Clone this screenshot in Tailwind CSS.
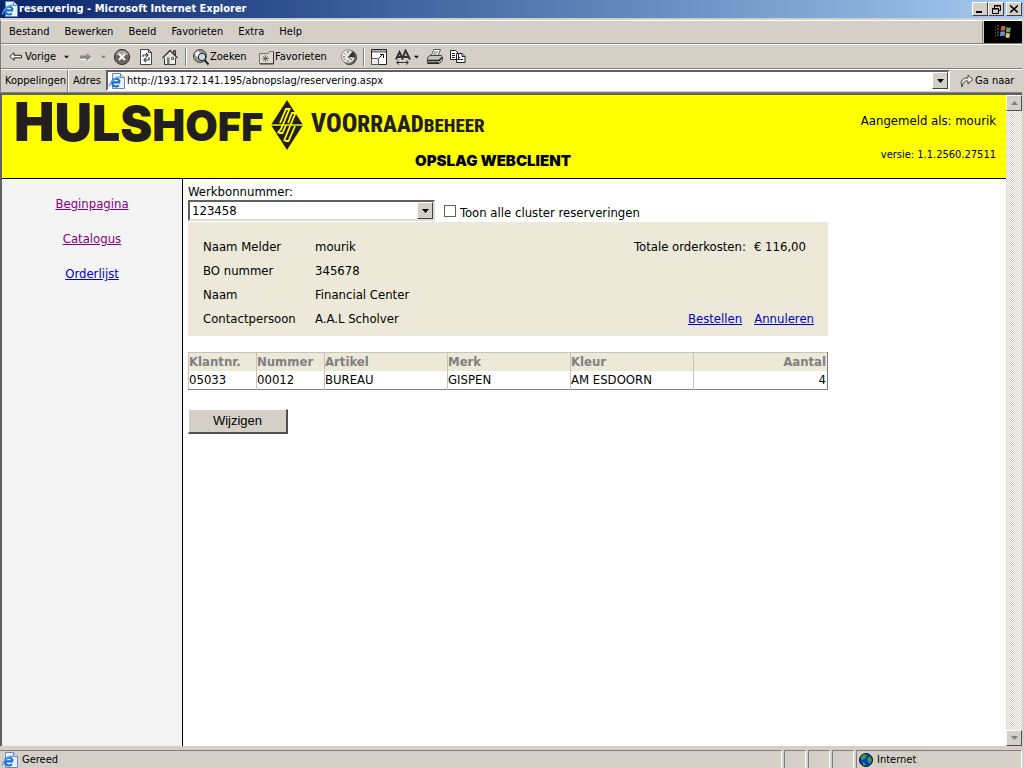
<!DOCTYPE html>
<html lang="nl">
<head>
<meta charset="utf-8">
<title>reservering - Microsoft Internet Explorer</title>
<script src="https://cdn.jsdelivr.net/npm/@tailwindcss/browser@4"></script>
</head>
<body class="flex h-screen flex-col overflow-hidden bg-[#d4d0c8] font-['DejaVu_Sans_Condensed','DejaVu_Sans',sans-serif] text-[11px] leading-4 text-black">

<svg class="hidden" aria-hidden="true">
  <symbol id="ie" viewBox="0 0 16 16">
    <path d="M3.500.5h8l4 4v11h-12z" fill="#e9f2ff" stroke="#6f86b8"/>
    <path d="M11.500.5v4h4" fill="#cfe0fa" stroke="#6f86b8"/>
    <path d="M11 9.300H3.800M10.800 8.800a3.900 3.900 0 1 0-1 3.500" fill="none" stroke="#1c6fd0" stroke-width="2.200"/>
    <path d="M.8 13.500C-.5 10 7 3.500 12 4" fill="none" stroke="#4ea3f0" stroke-width="1.300"/>
  </symbol>
  <symbol id="down" viewBox="0 0 7 4"><path d="M0 0h7L3.500 4z" fill="currentColor"/></symbol>
</svg>

<header class="shrink-0">
  <div class="flex h-[18px] items-center bg-linear-to-r from-[#0a246a] to-[#a6caf0] pr-0.5 pl-0.5">
    <svg class="size-4"><use href="#ie"/></svg>
    <h1 class="ml-px flex-1 font-bold text-white">reservering - Microsoft Internet Explorer</h1>
    <div class="flex">
      <button aria-label="Minimaliseren" class="flex h-[14px] w-4 items-center justify-center border border-white border-r-[#404040] border-b-[#404040] bg-[#d4d0c8]"><svg class="h-2 w-2.5" viewBox="0 0 10 8"><path d="M1 6h6v2H1z"/></svg></button>
      <button aria-label="Vorig formaat" class="flex h-[14px] w-4 items-center justify-center border border-white border-r-[#404040] border-b-[#404040] bg-[#d4d0c8]"><svg class="size-[9px]" viewBox="0 0 9 9" fill="none" stroke="#000"><path d="M2.500 3V.5h6v5H6.500M2 1h7M.5 3.500h6v5h-6zM0 4h7"/></svg></button>
      <button aria-label="Sluiten" class="ml-0.5 flex h-[14px] w-4 items-center justify-center border border-white border-r-[#404040] border-b-[#404040] bg-[#d4d0c8]"><svg class="size-2" viewBox="0 0 8 8"><path d="M0 .5l8 7M8 .5l-8 7" stroke="#000" stroke-width="1.600"/></svg></button>
    </div>
  </div>

  <div class="mr-0.5 border-l border-[#808080]">
    <div class="mt-0.5 flex h-6 border-t border-b border-t-white border-b-[#808080]">
      <nav class="flex flex-1 items-center gap-[15px] border-r border-[#808080] pl-2">
        <button>Bestand</button><button>Bewerken</button><button>Beeld</button><button>Favorieten</button><button>Extra</button><button>Help</button>
      </nav>
      <div class="ml-px flex w-[38px] items-center justify-center bg-black">
        <svg class="h-4 w-[18px]" viewBox="0 0 18 16">
          <path d="M7 3q2-2 4.500-.5L11 7Q9 5.500 6.500 7z" fill="#c8604c"/><path d="M12.500 3q2 1.500 4.500.3L16 8q-2.500 1-4-.5z" fill="#6da36a"/>
          <path d="M6.300 8Q8.500 6.500 11 8l-.5 4.500Q8 11 6 12.500z" fill="#6a93cb"/><path d="M12 8.500Q14 10 16 9l-.5 4.500q-2.500 1-4-.5z" fill="#d8c368"/>
          <path d="M1 3h1M3 2h2M1 6h1M3 5h2M1 9h1M3 8h2M1 12h1M3 11h2" stroke="#a66" />
        </svg>
      </div>
    </div>

    <div class="flex h-[25px] items-center border-t border-b border-t-white border-b-[#808080] pl-2">
      <button class="flex w-[54px] items-center gap-0.5"><svg class="h-[10px] w-3.5" viewBox="0 0 14 10" fill="#fff" stroke="#222"><path d="M.8 4.500 5 .8v2.500h7.500v2.500H5v2.500z"/></svg>Vorige</button>
      <svg class="h-1 w-[7px] scale-75"><use href="#down"/></svg>
      <svg class="ml-2 h-[10px] w-4" viewBox="0 0 16 10" fill="#8c8984"><path d="M2 3.500h6.500V1l5 4-5 4V6.500H2z"/><path d="M2 7.500h6M9 9.500l5-4" stroke="#fff"/></svg>
      <svg class="ml-1.5 h-1 w-[7px] scale-75 text-[#808080]"><use href="#down"/></svg>
      <button aria-label="Stoppen" class="ml-1.5"><svg class="size-[18px]" viewBox="0 0 18 18"><circle cx="9" cy="9" r="7.600" fill="#69675f" stroke="#34332e"/><path d="M3 7a6 4.500 0 0 1 12 0" fill="#aaa8a0"/><path d="M6 6l6 6m0-6-6 6" stroke="#fff" stroke-width="1.800"/></svg></button>
      <button aria-label="Vernieuwen" class="ml-1.5"><svg class="size-[18px]" viewBox="0 0 18 18"><path d="M3.500 1.500h8l3 3v12h-11z" fill="#fff" stroke="#444"/><path d="M11.500 1.500v3h3" fill="none" stroke="#444"/><path d="M6 9V7h5M9 5l2 2-2 2M12 9v3H7m2-2-2 2 2 2" fill="none" stroke="#444" stroke-width="1.200"/></svg></button>
      <button aria-label="Startpagina" class="ml-1.5"><svg class="size-[18px]" viewBox="0 0 18 18"><path d="M3.500 9v7.500h11V9" fill="#eee" stroke="#333"/><path d="M12.500 6V2.500h2V8" fill="#999" stroke="#333"/><path d="M1.500 10 9 2.500l7.500 7.500" fill="#e3e1db" stroke="#333" stroke-width="1.300"/><path d="M6 9.500h2.500v7H6z" fill="#777"/><path d="M10.500 9.500h2v2h-2z" fill="#fff" stroke="#555"/></svg></button>
      <span class="ml-1.5 h-[18px] w-0.5 border-l border-r border-l-[#808080] border-r-white"></span>
      <button class="ml-[5px] flex w-[58px] items-center"><svg class="size-[18px] shrink-0" viewBox="0 0 18 18"><circle cx="8" cy="8" r="6.500" fill="#9a9890" stroke="#444"/><path d="M3 5l3-2 2 2-2 4-2-1z" fill="#fff"/><circle cx="10" cy="9" r="3.700" fill="#c9dadf" stroke="#222"/><path d="M12.500 12l4 4.500" stroke="#222" stroke-width="2"/></svg>Zoeken</button>
      <button class="ml-2 flex w-[74px] items-center"><svg class="h-4 w-[17px] shrink-0" viewBox="0 0 17 16"><path d="M1.500 14.500V4.500h9l1-2h4v12z" fill="#dedbd3" stroke="#77746d"/><path d="M15.500 3v12H2" fill="none" stroke="#333"/><path d="M7.500 6v7M4 9.500h7M5 7l5 5m0-5-5 5" stroke="#555" stroke-width=".8"/></svg>Favorieten</button>
      <button aria-label="Geschiedenis" class="ml-2"><svg class="size-[18px]" viewBox="0 0 18 18"><circle cx="9.500" cy="9.500" r="7" fill="#696760" stroke="#333"/><circle cx="8" cy="8.500" r="6.700" fill="#e8e6e0" stroke="#88857c"/><path d="M8 9 12.500 3.500a7 7 0 0 1 2.500 6z" fill="#333"/><path d="M8 3v2M3 9h2M8 12v2M4.500 5.500l1 1M4.500 12l1-1M8 9l4 3" stroke="#555"/></svg></button>
      <span class="ml-[5px] h-[18px] w-0.5 border-l border-r border-l-[#808080] border-r-white"></span>
      <button aria-label="Volledig scherm" class="ml-1.5"><svg class="size-4" viewBox="0 0 16 16"><path d="M.5.5h15v15H.5z" fill="#fff" stroke="#222"/><path d="M1 2.500h14" stroke="#777" stroke-width="2"/><path d="M.5 9.500h7v6h-7z" fill="#eee" stroke="#555"/><path d="M8 9l4-4M9 5.500h3.500V9" fill="none" stroke="#111"/></svg></button>
      <button aria-label="Tekengrootte" class="ml-2 flex items-center"><svg class="size-4" viewBox="0 0 16 16" fill="none" stroke="#333"><path d="M1 10.500 4.500 3 8 10.500M2.500 8h4M7 10.500l3.500-9L15 10.500M8.500 8h5" stroke-width="2"/><path d="M2 13.500h11M4 11.500l-2.500 2L4 15.500M11 11.500l2.500 2-2.500 2"/></svg><svg class="ml-0.5 h-1 w-[7px] scale-75"><use href="#down"/></svg></button>
      <button aria-label="Afdrukken" class="ml-1.5"><svg class="size-[18px]" viewBox="0 0 18 18"><path d="M5 8l3-6.500h6.500L12 8z" fill="#fff" stroke="#555"/><path d="M8 4h4M7 6h4" stroke="#777"/><path d="M1.500 9.500 4 7.500h11.500l1 2v3l-3 3h-12z" fill="#c5c2ba" stroke="#444"/><path d="M2 12.500h11l3-3M2 15h11" fill="none" stroke="#222" stroke-width="1.500"/></svg></button>
      <button aria-label="Kopiëren" class="ml-1.5"><svg class="h-[15px] w-4" viewBox="0 0 16 15" fill="#fff" stroke="#222"><path d="M.5 1.500h5l3 3v6h-8zM6.500 4.500h5.500l3 3v6H6.500z"/><path d="M12 4.500v3h3M2 4.500h3M2 6.500h3M2 8.500h3M8 8.500h2M8 10.500h5" fill="none"/></svg></button>
    </div>

    <div class="flex h-[24px] items-stretch border-t border-b border-t-white border-b-[#808080]">
      <span class="flex w-[67px] items-center border-r border-[#808080] pl-1">Koppelingen</span>
      <label for="adres" class="flex w-[38px] items-center border-l border-white pl-1">Adres</label>
      <div class="flex h-[21px] flex-1 items-center border-2 border-white border-t-[#606060] border-l-[#606060] bg-white pl-px">
        <svg class="size-4"><use href="#ie"/></svg>
        <input id="adres" class="ml-0.5 h-4 min-w-0 flex-1 bg-white outline-none" value="http://193.172.141.195/abnopslag/reservering.aspx">
        <button aria-label="Adreslijst openen" class="flex h-[17px] w-4 items-center justify-center border border-white border-r-[#404040] border-b-[#404040] bg-[#d4d0c8]"><svg class="h-1 w-[7px]"><use href="#down"/></svg></button>
      </div>
      <button class="ml-2.5 flex w-[62px] items-center gap-px"><svg class="size-3.5" viewBox="0 0 14 14"><path d="M2 13C-.5 7 3 3.500 8 4V1l5 4.500L8 10V7C5 6.500 3 8 2 13z" fill="#eceae4" stroke="#444"/></svg>Ga naar</button>
    </div>
  </div>
</header>

<div class="mr-0.5 flex min-h-0 flex-1 border-t-2 border-l-2 border-[#606060] bg-white text-[13px]">
  <div class="flex min-w-0 flex-1 flex-col">
    <div class="flex h-[84px] shrink-0 justify-between border-b border-black bg-[#ffff00]">
      <div class="pl-3">
        <div class="flex h-[59px] items-center text-[#231f20]">
          <div class="flex w-[257px] items-baseline font-['Inter'] leading-[56px] font-black" aria-label="HULSHOFF"><span class="text-[54px]">H</span><span class="text-[52px]">U</span><span class="text-[50px]">L</span><span class="text-[48px]">S</span><span class="text-[44px]">H</span><span class="text-[42px]">O</span><span class="text-[40px]">F</span><span class="text-[38px]">F</span></div>
          <svg class="h-[50px] w-8 shrink-0" viewBox="0 0 32 50">
            <path d="M16 0 32 25 16 50 0 25z" fill="#231f20"/>
            <path d="M0 25h32" stroke="#ff0" stroke-width="1.400"/>
            <path d="M9 23 15 9h3.500L10 29 6.500 33M17 23l4-10h3.500L16 33.500 13 41M8 33h3.500L15 25M14 41h3.500L24 26" fill="none" stroke="#ff0" stroke-width="1.800"/>
          </svg>
          <div class="ml-2 flex items-baseline font-['Roboto_Condensed','Open_Sans_Condensed','Noto_Sans_Condensed','Liberation_Sans'] leading-8 font-extrabold" aria-label="VOORRAADBEHEER"><span class="text-[26px]">VOO</span><span class="text-[23px]">RRAAD</span><span class="text-[19px]">BEHEER</span></div>
        </div>
        <p class="pl-[401px] font-['Inter'] text-[15px] leading-[14px] font-black">OPSLAG WEBCLIENT</p>
      </div>
      <div class="pt-4 pr-2.5 text-right">
        <p class="leading-5">Aangemeld als: mourik</p>
        <p class="mt-3.5 text-[11px] leading-5">versie: 1.1.2560.27511</p>
      </div>
    </div>

    <div class="flex min-h-0 flex-1">
      <nav class="flex w-[181px] shrink-0 flex-col items-center gap-[15px] border-r border-black bg-[#f4f4f4] pt-[15px] leading-5">
        <a href="#" class="text-[#800080] underline">Beginpagina</a>
        <a href="#" class="text-[#800080] underline">Catalogus</a>
        <a href="#" class="text-[#0000cc] underline">Orderlijst</a>
      </nav>

      <main class="min-w-0 flex-1 pt-[5px] pl-[5px]">
        <label for="werkbon" class="block leading-4">Werkbonnummer:</label>
        <div class="flex items-center">
          <div class="relative h-[21px] w-[247px]">
            <select id="werkbon" class="h-full w-full appearance-none border-2 border-[#e0ddd6] border-t-[#606060] border-l-[#606060] bg-white pl-0.5 leading-4"><option>123458</option></select>
            <span class="pointer-events-none absolute top-0.5 right-0.5 flex h-[17px] w-4 items-center justify-center border border-white border-r-[#404040] border-b-[#404040] bg-[#d4d0c8]"><svg class="h-1 w-[7px]"><use href="#down"/></svg></span>
          </div>
          <input id="cluster" type="checkbox" class="ml-[9px] size-3 appearance-none border border-[#606060] bg-white">
          <label for="cluster" class="ml-1 pt-1">Toon alle cluster reserveringen</label>
        </div>

        <section class="mt-px flex w-[640px] justify-between bg-[#ece9d8] pt-[13px] pr-3.5 pb-[5px] pl-[15px] leading-6">
          <dl class="grid grid-cols-[112px_1fr]">
            <dt>Naam Melder</dt><dd>mourik</dd>
            <dt>BO nummer</dt><dd>345678</dd>
            <dt>Naam</dt><dd>Financial Center</dd>
            <dt>Contactpersoon</dt><dd>A.A.L Scholver</dd>
          </dl>
          <div class="flex flex-col items-end justify-between">
            <p class="flex gap-2 pr-2"><span>Totale orderkosten:</span><span>€ 116,00</span></p>
            <p class="flex gap-3"><a href="#" class="text-[#0000cc] underline">Bestellen</a><a href="#" class="text-[#0000cc] underline">Annuleren</a></p>
          </div>
        </section>

        <table class="mt-4 w-[640px] table-fixed border-collapse border border-[#c8c5b8] border-r-[#808080] border-b-[#808080] text-left leading-[18px]">
          <colgroup><col class="w-[68px]"><col class="w-[68px]"><col class="w-[123px]"><col class="w-[123px]"><col class="w-[123px]"><col></colgroup>
          <thead class="bg-[#ece9d8] text-[#808080]">
            <tr><th>Klantnr.</th><th class="border-l border-[#c8c5b8]">Nummer</th><th class="border-l border-[#c8c5b8]">Artikel</th><th class="border-l border-[#c8c5b8]">Merk</th><th class="border-l border-[#c8c5b8]">Kleur</th><th class="border-l border-[#c8c5b8] pr-px text-right">Aantal</th></tr>
          </thead>
          <tbody>
            <tr><td>05033</td><td class="border-l border-[#c8c5b8]">00012</td><td class="border-l border-[#c8c5b8]">BUREAU</td><td class="border-l border-[#c8c5b8]">GISPEN</td><td class="border-l border-[#c8c5b8]">AM ESDOORN</td><td class="border-l border-[#c8c5b8] pr-px text-right">4</td></tr>
          </tbody>
        </table>

        <button class="mt-[19px] block h-[25px] w-[100px] border border-white border-r-2 border-b-2 border-r-[#505050] border-b-[#505050] bg-[#d4d0c8] font-['Liberation_Sans'] text-[13px]">Wijzigen</button>
      </main>
    </div>
  </div>

  <div class="flex w-4 shrink-0 flex-col justify-between bg-[repeating-conic-gradient(#ffffff_0_25%,#d4d0c8_0_50%)] bg-[length:2px_2px]">
    <button aria-label="Omhoog" class="flex size-4 items-center justify-center border border-white border-r-[#505050] border-b-[#505050] bg-[#d4d0c8] text-[#808080]"><svg class="h-1 w-[7px] rotate-180"><use href="#down"/></svg></button>
    <button aria-label="Omlaag" class="flex size-4 items-center justify-center border border-white border-r-[#505050] border-b-[#505050] bg-[#d4d0c8] text-[#808080]"><svg class="h-1 w-[7px]"><use href="#down"/></svg></button>
  </div>
</div>

<footer class="mt-1 flex h-[18px] shrink-0 gap-0.5 pr-0.5">
  <div class="flex flex-1 items-center gap-1 border-t border-r border-t-[#808080] border-r-white pl-0.5"><svg class="size-4"><use href="#ie"/></svg>Gereed</div>
  <div class="w-[22px] border border-b-0 border-[#808080] border-r-white"></div>
  <div class="w-[22px] border border-b-0 border-[#808080] border-r-white"></div>
  <div class="w-[22px] border border-b-0 border-[#808080] border-r-white"></div>
  <div class="flex w-[166px] items-center gap-1 border border-b-0 border-[#808080] border-r-white pl-0.5"><svg class="size-3.5" viewBox="0 0 14 14"><circle cx="7" cy="7" r="6.500" fill="#1436b8" stroke="#112"/><path d="M2 4l3-3 3 1-1 3-3 2-2-1zM8 6l3-3 2 4-2 4-2-2zM3 9l3 1 1 3-3-1z" fill="#2fa044"/></svg>Internet</div>
</footer>
</body>
</html>
